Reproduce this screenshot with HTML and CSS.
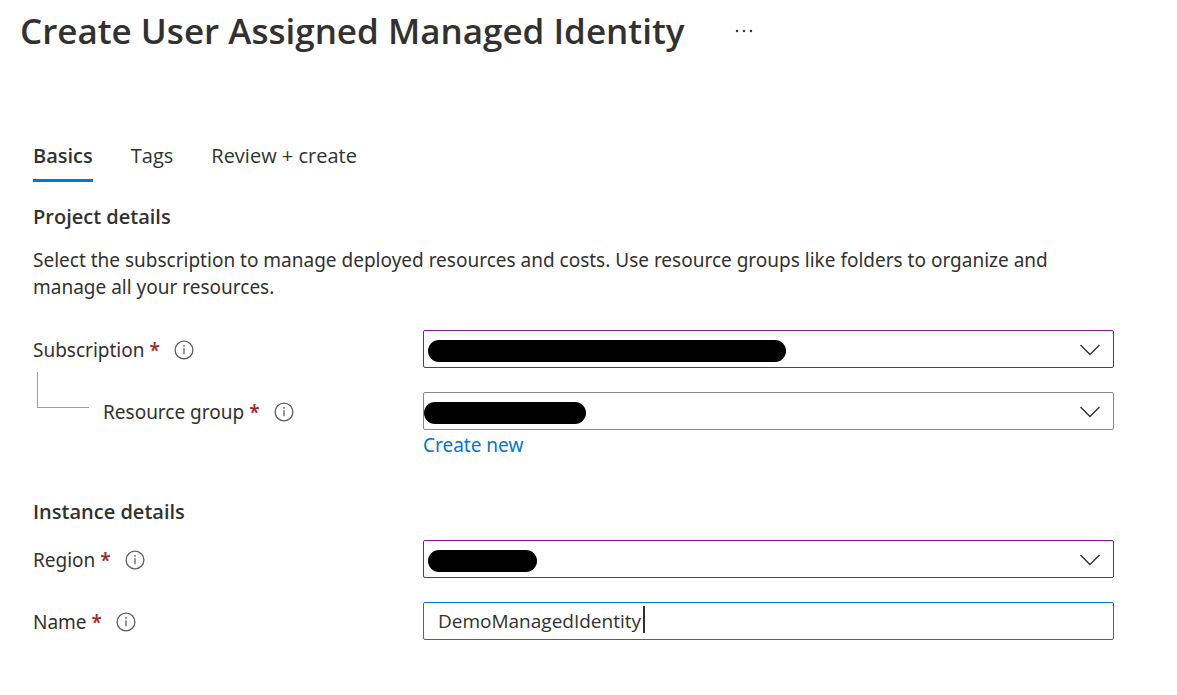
FILE: index.html
```html
<!DOCTYPE html>
<html lang="en">
<head>
<meta charset="utf-8">
<meta name="viewport" content="width=device-width, initial-scale=1">
<title>Create User Assigned Managed Identity</title>
<link rel="stylesheet" href="styles.css">
</head>
<body>
<svg class="sprite" aria-hidden="true">
  <symbol id="info" viewBox="0 0 20 20"><circle cx="10" cy="10" r="8.9" fill="none" stroke="currentColor" stroke-width="1.3"/><path d="M10 8.2v6" stroke="currentColor" stroke-width="1.3"/><circle cx="10" cy="5.9" r=".9" fill="currentColor"/></symbol>
  <symbol id="chevron" viewBox="0 0 20 12"><path d="M.5 .9 10 10.4 19.5 .9" fill="none" stroke="currentColor" stroke-width="1.4"/></symbol>
</svg>
<header class="header">
  <h1 class="title">Create User Assigned Managed Identity</h1>
  <button class="more" type="button" aria-label="More actions"><svg class="dots" viewBox="0 0 18 4"><circle cx="2" cy="2" r="1.2"/><circle cx="9" cy="2" r="1.2"/><circle cx="16" cy="2" r="1.2"/></svg></button>
</header>
<main class="content">
  <nav class="tabs">
    <button class="tab active" type="button">Basics</button>
    <button class="tab" type="button">Tags</button>
    <button class="tab" type="button">Review + create</button>
  </nav>
  <form class="form">
    <h2 class="heading">Project details</h2>
    <p class="intro">Select the subscription to manage deployed resources and costs. Use resource groups like folders to organize and manage all your resources.</p>
    <div class="rows">
      <div class="row">
        <div class="label"><label for="subscription">Subscription <span class="required">*</span></label><svg class="info"><use href="#info"/></svg></div>
        <div class="control"><select class="field changed" id="subscription"><option></option></select><span class="mask mask-long"></span><svg class="chevron"><use href="#chevron"/></svg></div>
      </div>
      <div class="row">
        <div class="label"><span class="branch"></span><label for="group">Resource group <span class="required">*</span></label><svg class="info"><use href="#info"/></svg></div>
        <div class="control"><select class="field" id="group"><option></option></select><span class="mask mask-medium"></span><svg class="chevron"><use href="#chevron"/></svg></div>
        <a class="link" href="#new">Create new</a>
      </div>
    </div>
    <h2 class="heading instance">Instance details</h2>
    <div class="rows">
      <div class="row">
        <div class="label"><label for="region">Region <span class="required">*</span></label><svg class="info"><use href="#info"/></svg></div>
        <div class="control"><select class="field changed" id="region"><option></option></select><span class="mask mask-short"></span><svg class="chevron"><use href="#chevron"/></svg></div>
      </div>
      <div class="row">
        <div class="label"><label for="name">Name <span class="required">*</span></label><svg class="info"><use href="#info"/></svg></div>
        <div class="control"><input class="field focused" id="name" type="text" value="DemoManagedIdentity"><span class="caret"></span></div>
      </div>
    </div>
  </form>
</main>
</body>
</html>
```
FILE: styles.css
```css
* { box-sizing: border-box; }
body { margin: 0; background: #fff; color: #323130; font: 19px/27px "Noto Sans", "Open Sans", sans-serif; }
button, input, select { font: inherit; color: inherit; }
.sprite { position: absolute; width: 0; height: 0; }
.header { display: flex; align-items: center; gap: 46px; padding: 4px 20px 0; }
.title { margin: 0; font-family: "Open Sans", sans-serif; font-size: 35px; line-height: 54px; font-weight: 600; }
.more { display: flex; padding: 4px; border: 0; background: none; }
.dots { width: 18px; height: 4px; fill: #323130; }
.content { padding: 80px 63px 0 33px; }
.tabs { display: flex; gap: 38px; }
.tab { padding: 4px 0 10px; border: 0; border-bottom: 3px solid transparent; background: none; font-family: "Open Sans", sans-serif; font-size: 20px; }
.tab.active { border-color: #0078d4; font-weight: 600; }
.heading { margin: 0; font-family: "Open Sans", sans-serif; font-size: 20px; font-weight: 600; line-height: 28px; }
.form { padding-top: 21px; }
.intro { margin: 16px 0 29px; }
.rows { display: grid; gap: 24px; }
.row { display: grid; grid-template-columns: 390px 1fr; }
.label { display: flex; align-items: center; height: 38px; padding-top: 2px; }
.required { color: #a4262c; font-weight: 600; }
.info { width: 20px; height: 20px; margin-left: 14px; color: #605e5c; }
.branch { align-self: flex-start; width: 52px; height: 36px; margin: -22px 14px 0 4px; border: solid #a19f9d; border-width: 0 0 1px 1px; }
.control { position: relative; }
.field { display: block; width: 100%; height: 38px; padding: 0 14px; border: 1px solid #8a8886; border-radius: 2px; background: #fff; font-family: "Open Sans", sans-serif; outline: 0; appearance: none; }
.changed { border-color: #881798; }
.focused { border-color: #0078d4; }
.chevron { position: absolute; right: 14px; top: 14px; width: 20px; height: 12px; pointer-events: none; }
.mask { position: absolute; left: 5px; top: 10px; height: 22px; border-radius: 11px; background: #000; pointer-events: none; }
.mask-long { width: 358px; }
.mask-medium { left: 1px; width: 162px; }
.mask-short { width: 109px; }
.caret { position: absolute; left: 220px; top: 4px; width: 2px; height: 27px; background: #323130; }
.link { grid-column: 2; margin-top: 2px; color: #0078d4; text-decoration: none; }
.instance { margin: 39px 0 14px; }
```
